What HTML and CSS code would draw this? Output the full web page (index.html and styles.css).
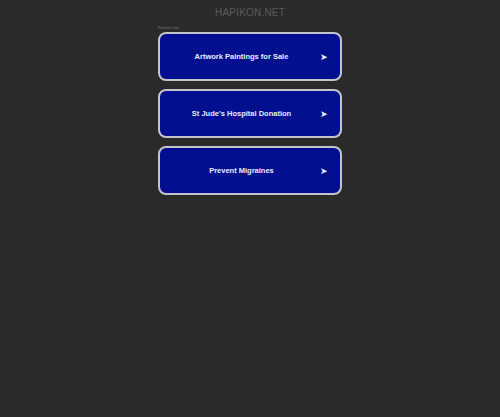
FILE: index.html
```html
<!DOCTYPE html>
<html>
<head>
<meta charset="utf-8">
<link rel="stylesheet" href="styles.css">
</head>
<body>
<div class="page">
  <div class="title">HAPIKON.NET</div>
  <div class="links">
    <div class="label">Related Links</div>
    <a class="link" href="#"><span class="text">Artwork Paintings for Sale</span><span class="arrow">&#10148;</span></a>
    <a class="link" href="#"><span class="text">St Jude's Hospital Donation</span><span class="arrow">&#10148;</span></a>
    <a class="link" href="#"><span class="text">Prevent Migraines</span><span class="arrow">&#10148;</span></a>
  </div>
</div>
</body>
</html>
```
FILE: styles.css
```css
html, body {
  margin: 0;
  padding: 0;
  background: #2a2a2a;
  font-family: "Liberation Sans", Arial, sans-serif;
}
.page {
  width: 500px;
  height: 417px;
  display: flex;
  flex-direction: column;
  align-items: center;
}
.title {
  margin-top: 6px;
  height: 14px;
  line-height: 14px;
  font-size: 10px;
  color: #5a5a5a;
  letter-spacing: 0.2px;
}
.links {
  width: 184px;
  display: flex;
  flex-direction: column;
  gap: 8px;
}
.label {
  font-size: 3.5px;
  color: #777;
  height: 4px;
  line-height: 4px;
  margin-top: 6px;
  margin-bottom: -6px;
}
.link {
  box-sizing: border-box;
  height: 49px;
  border: 2px solid #c4c4cc;
  border-radius: 8px;
  background: #021090;
  display: flex;
  align-items: center;
  text-decoration: none;
  color: #e8ecff;
  position: relative;
}
.text {
  flex: 1;
  text-align: center;
  font-size: 7.5px;
  font-weight: bold;
  padding-right: 18px;
  padding-left: 1px;
}
.arrow {
  position: absolute;
  right: 12px;
  font-size: 9px;
  color: #e8ecff;
}
```
